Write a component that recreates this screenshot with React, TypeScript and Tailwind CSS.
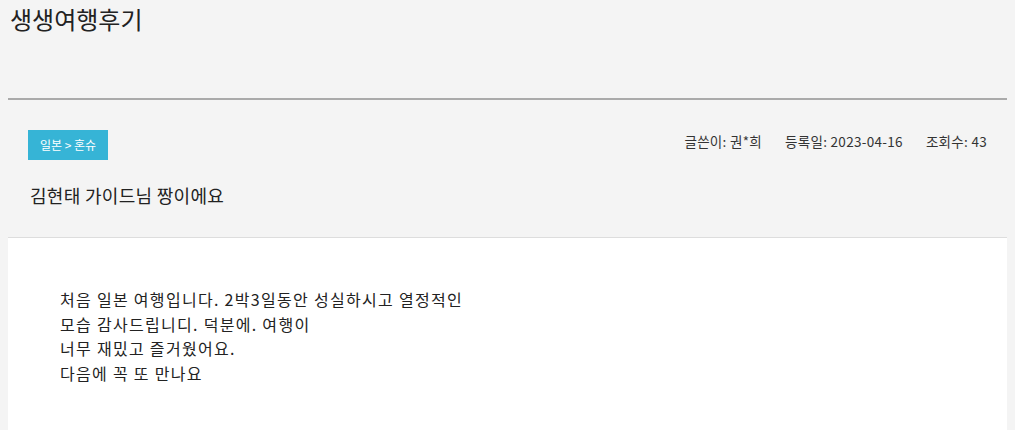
export default function App() {
  return (
    <div
      className="min-h-screen bg-[#f4f4f4] px-2 text-[#222]"
      style={{ fontFamily: '"Noto Sans CJK KR", "Noto Sans", sans-serif' }}
    >
      {/* Page title */}
      <div className="h-[100px] border-b-2 border-[#aaaaaa]">
        <h1 className="pl-0.5 pt-0.5 text-[24px] leading-[34px] font-normal">생생여행후기</h1>
      </div>

      {/* Post header */}
      <div className="border-b border-[#dddddd] px-5 pt-[30px] pb-[28px]">
        <div className="flex items-start justify-between">
          <span className="flex h-[30px] w-20 items-center justify-center bg-[#36b4d6] text-[12px] text-white">
            일본 &gt; 혼슈
          </span>
          <div className="flex gap-[23px] pt-[1px] text-[13.5px] leading-[20px] tracking-[0.3px] text-[#333]">
            <span>글쓴이: 권*희</span>
            <span>등록일: 2023-04-16</span>
            <span>조회수: 43</span>
          </div>
        </div>
        <h2 className="mt-[21px] pl-0.5 text-[18px] leading-[28px] tracking-[0.3px] font-normal">김현태 가이드님 짱이에요</h2>
      </div>

      {/* Post body */}
      <div className="min-h-[200px] bg-white px-[52px] pt-[49px] text-[16px] leading-[24.5px] tracking-[1.3px] text-[#222]">
        <p>처음 일본 여행입니다. 2박3일동안 성실하시고 열정적인</p>
        <p>모습 감사드립니디. 덕분에. 여행이</p>
        <p>너무 재밌고 즐거웠어요.</p>
        <p>다음에 꼭 또 만나요</p>
      </div>
    </div>
  );
}
